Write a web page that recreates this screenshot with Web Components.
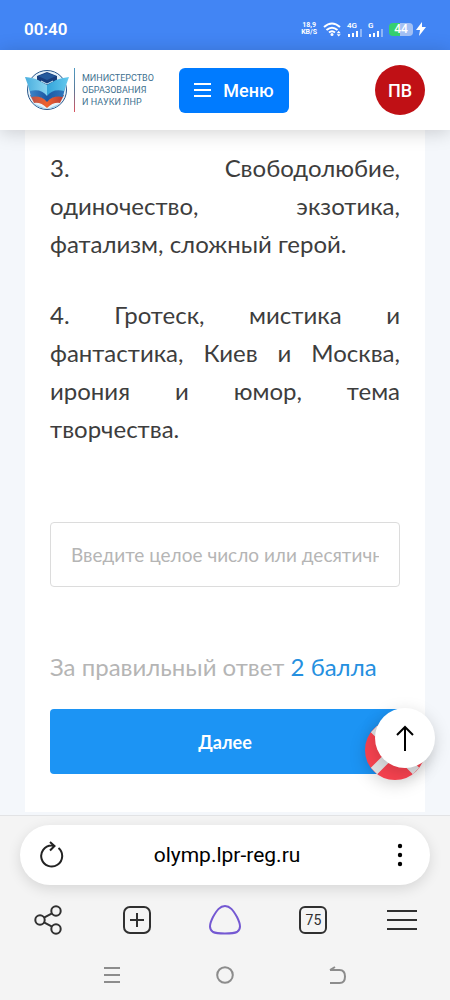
<!DOCTYPE html>
<html lang="ru">
<head>
<meta charset="utf-8">
<meta name="viewport" content="width=device-width, initial-scale=1">
<title>Олимпиада</title>
<style>
  body { margin: 0; min-height: 100vh; display: flex; flex-direction: column; background: #f4f7fb; font-family: Roboto, "Liberation Sans", sans-serif; }
  question-page { flex: 1; }
</style>
</head>
<body>
<status-bar></status-bar>
<site-header initials="ПВ"></site-header>
<question-page>
  <question-card>
    <p>3. Свободолюбие, одиночество, экзотика, фатализм, сложный герой.</p>
    <p>4. Гротеск, мистика и фантастика, Киев и Москва, ирония и юмор, тема творчества.</p>
    <answer-form slot="answer"></answer-form>
  </question-card>
</question-page>
<browser-bar tabs="75">olymp.lpr-reg.ru</browser-bar>
<system-nav></system-nav>

<script>
const define = (name, html, setup) => {
  const template = document.createElement('template');
  template.innerHTML = `<style>*{box-sizing:border-box}button{font:inherit;color:inherit;border:0;padding:0;background:none;cursor:pointer}svg{display:block}</style>${html}`;
  customElements.define(name, class extends HTMLElement {
    constructor() {
      super();
      this.attachShadow({ mode: 'open' }).append(template.content.cloneNode(true));
    }
    connectedCallback() { if (setup) setup(this, this.shadowRoot); }
  });
};

define('status-bar', `
<style>
  :host { display: flex; align-items: center; justify-content: space-between; height: 50px; padding: 8px 24px 0; box-sizing: border-box; background: #4285f4; color: #fff; }
  time { font-size: 17px; font-weight: 600; }
  .icons { display: flex; align-items: center; gap: 6px; }
  .speed { font-size: 7px; line-height: 7px; font-weight: 700; text-align: center; }
  .sim { font-size: 8px; line-height: 7px; font-weight: 600; width: 15px; }
  .battery { width: 24px; height: 13px; border-radius: 4px; font-size: 12px; line-height: 13px; font-weight: 500; text-align: center; background: linear-gradient(90deg, #35cf70 44%, #a3c0f4 44%); }
  .power { display: flex; align-items: center; gap: 3px; }
</style>
<time>00:40</time>
<div class="icons">
  <div class="speed">18,9<br>KB/S</div>
  <svg width="18" height="15" viewBox="0 0 18 15" fill="none" stroke="#fff" stroke-width="2"><path d="M1 5Q9-2 17 5M3.500 8Q9 3.500 14.500 8M6 10.500Q9 8 12 10.500"/><circle cx="9" cy="12.500" r="1.500" fill="#fff" stroke="none"/><path d="M13.700 11.200 15.700 8.800 17.700 11.200zM13.700 12.200 15.700 14.600 17.700 12.200z" fill="#fff" stroke="none"/></svg>
  <div class="sim">4G<svg width="15" height="8" viewBox="0 0 15 8" stroke="#fff" stroke-width="2"><path d="M2 8V5M6 8V4M10 8V2"/><path d="M14 8V0" opacity=".4"/></svg></div>
  <div class="sim">G<svg width="15" height="8" viewBox="0 0 15 8" stroke="#fff" stroke-width="2"><path d="M2 8V5M6 8V4M10 8V2"/><path d="M14 8V0" opacity=".4"/></svg></div>
  <div class="power"><div class="battery">44</div><svg width="10" height="14" viewBox="0 0 10 14"><path d="M6 0 0 8h4l-1 6 7-9H6z" fill="#fff"/></svg></div>
</div>`);

define('ministry-logo', `
<style>
  :host { display: block; }
  a { display: flex; align-items: center; color: #40718f; text-decoration: none; font-size: 9px; line-height: 12px; }
  span { margin-left: 5px; padding: 4px 0 4px 7px; border-left: 1px solid; border-image: linear-gradient(#4d9cc4, #5b7897 50%, #e0505c) 1; white-space: nowrap; }
</style>
<a href="#">
  <svg width="44" height="44" viewBox="0 0 44 44">
    <defs>
      <linearGradient id="wing"><stop stop-color="#49aede"/><stop offset=".5" stop-color="#86d3f0"/><stop offset=".5" stop-color="#33a4da"/><stop offset="1" stop-color="#65c9ee"/></linearGradient>
      <linearGradient id="blue"><stop stop-color="#3e86c9"/><stop offset=".5" stop-color="#1c57a3"/><stop offset="1" stop-color="#2f78bd"/></linearGradient>
      <linearGradient id="red"><stop stop-color="#b6514b"/><stop offset=".5" stop-color="#f0622e"/><stop offset="1" stop-color="#b43b38"/></linearGradient>
      <clipPath id="disc"><circle cx="22" cy="22" r="19"/></clipPath>
    </defs>
    <circle cx="22" cy="22" r="19.500" fill="#e6f3fa" stroke="#27568b"/>
    <g clip-path="url(#disc)">
      <path d="M5 34 22 41 39 34 34 44H10z" fill="#9fd0ee"/>
      <path d="M5 27Q15 26 22 33 29 26 39 27L35 35Q28 34 22 40 16 34 9 35z" fill="url(#red)"/>
    </g>
    <path d="M4 20Q15 18 22 26 29 18 40 20L38 29Q28 27 22 34 16 27 6 29z" fill="url(#blue)"/>
    <path d="M12 8 22 4 32 8V14L22 19 12 14z" fill="#163e7e"/>
    <path d="M13 8 22 12 31 8 22 5z" fill="#245a9c"/>
    <path d="M0 9Q9 10 13 12L22 17 31 12Q36 10 44 9L39 23Q28 20 22 28 16 20 5 23z" fill="url(#wing)"/>
    <path d="M16 13 22 16 28 13" fill="none" stroke="#d3f1fb"/>
  </svg>
  <span>МИНИСТЕРСТВО<br>ОБРАЗОВАНИЯ<br>И НАУКИ ЛНР</span>
</a>`);

define('site-header', `
<style>
  :host { display: flex; align-items: center; height: 80px; padding: 0 25px; box-sizing: border-box; background: #fff; box-shadow: 0 2px 18px rgba(0,0,0,.18); position: relative; z-index: 1; }
  .menu { display: flex; align-items: center; justify-content: center; gap: 12px; width: 110px; height: 45px; margin-left: 25px; border-radius: 6px; background: #007bff; color: #fff; font-size: 18px; font-weight: 500; }
  .user { width: 50px; height: 50px; margin-left: auto; border-radius: 50%; background: #c01015; color: #fff; font-size: 18px; font-weight: 500; }
</style>
<ministry-logo></ministry-logo>
<button class="menu"><svg width="17" height="16" viewBox="0 0 17 16" stroke="#fff" stroke-width="2"><path d="M0 2H17M0 8H17M0 14H17"/></svg>Меню</button>
<button class="user"></button>`,
(host, root) => { root.querySelector('.user').textContent = host.getAttribute('initials'); });

define('question-page', `
<style>
  :host { display: block; position: relative; padding: 0 25px 3px; background: #f4f7fb; }
  .help, .top { position: absolute; width: 60px; height: 60px; border-radius: 50%; filter: drop-shadow(0 4px 8px rgba(0,0,0,.16)); }
  .help { right: 25px; bottom: 35px; }
  .top { right: 15px; bottom: 47px; display: grid; place-items: center; background: #fff; }
</style>
<slot></slot>
<button class="help" aria-label="Помощь"><svg width="60" height="60" viewBox="0 0 60 60" fill="none" stroke-width="17"><circle cx="30" cy="30" r="21.500" stroke="#f5424f"/><path d="M9 9 21 21M51 9 39 21M9 51 21 39M51 51 39 39" stroke="#dedfe1" stroke-width="9"/></svg></button>
<button class="top" aria-label="Наверх"><svg width="18" height="26" viewBox="0 0 18 26" fill="none" stroke="#000" stroke-width="2"><path d="M9 26V2M1 10 9 2 17 10"/></svg></button>`);

define('question-card', `
<style>
  :host { display: block; padding: 19px 25px 38px; background: #fff; color: #3d3d3d; font: 24px/38px Lato, "Noto Sans", sans-serif; }
  ::slotted(p) { margin: 0 0 33px; text-align: justify; }
</style>
<slot></slot>
<slot name="answer"></slot>`);

define('answer-form', `
<style>
  :host { display: block; margin-top: 74px; }
  form { display: flex; flex-direction: column; }
  input { width: 100%; height: 65px; padding: 0 20px; border: 1px solid #dcdcdc; border-radius: 4px; background: #fff; color: #3d3d3d; font: inherit; font-size: 19px; }
  input::placeholder { color: #b5b5b5; opacity: 1; }
  p { margin: 61px 0 23px; color: #b5b5b5; }
  b { color: #2590e0; font-weight: 400; }
  button { height: 65px; border-radius: 4px; background: #1c94f4; color: #fff; font-size: 18px; font-weight: 700; }
</style>
<form>
  <input type="text" aria-label="Ответ" placeholder="Введите целое число или десятичную дробь">
  <p>За правильный ответ <b>2 балла</b></p>
  <button type="button">Далее</button>
</form>`);

define('browser-bar', `
<style>
  :host { display: block; padding: 9px 0 0; border-top: 1px solid #e2e3e5; background: #f4f4f4; color: #303030; }
  .address { display: flex; align-items: center; justify-content: space-between; height: 60px; margin: 0 20px; padding: 0 20px; border-radius: 30px; background: #fff; box-shadow: 0 4px 14px rgba(0,0,0,.12); color: #000; font-size: 21px; }
  .url { flex: 1; }
  nav { display: grid; grid-template-columns: repeat(5, 1fr); height: 65px; padding: 5px 4px 0; }
  nav button { display: grid; place-items: center; }
  .tabs b { display: grid; place-items: center; width: 28px; height: 28px; border: 2px solid; border-radius: 6px; font-size: 14px; font-weight: 400; }
</style>
<div class="address">
  <button aria-label="Обновить"><svg width="24" height="28" viewBox="0 0 24 28" fill="none" stroke="#222" stroke-width="2"><path d="M14 4.500H11.500A10.500 10.500 0 1 0 18.500 7M10 1 14.500 5 10 9.500"/></svg></button>
  <button class="url"><slot></slot></button>
  <button aria-label="Ещё"><svg width="20" height="24" viewBox="0 0 20 24"><circle cx="10" cy="3" r="2.200"/><circle cx="10" cy="12" r="2.200"/><circle cx="10" cy="21" r="2.200"/></svg></button>
</div>
<nav aria-label="Браузер">
  <button aria-label="Поделиться"><svg width="28" height="30" viewBox="0 0 28 30" fill="none" stroke="#303030" stroke-width="2"><circle cx="6" cy="15" r="4.700"/><circle cx="22" cy="6" r="4.700"/><circle cx="22" cy="24" r="4.700"/><path d="M10 12.700 18 8.300M10 17.300 18 21.700"/></svg></button>
  <button aria-label="Новая вкладка"><svg width="28" height="28" viewBox="0 0 28 28" fill="none" stroke="#303030" stroke-width="2"><rect x="1" y="1" width="26" height="26" rx="6"/><path d="M7 14H21M14 7V21"/></svg></button>
  <button aria-label="Алиса"><svg width="32" height="30" viewBox="0 0 32 30" fill="none" stroke="#7458d2" stroke-width="2"><path d="M16 1C21 1 24 5 28 12 32 20 32 24 28 27 24 29 8 29 4 27 0 24 0 20 4 12 8 5 11 1 16 1z"/></svg></button>
  <button class="tabs" aria-label="Вкладки"><b></b></button>
  <button aria-label="Меню браузера"><svg width="30" height="22" viewBox="0 0 30 22" stroke="#303030" stroke-width="2"><path d="M0 2H30M0 11H30M0 20H30"/></svg></button>
</nav>`,
(host, root) => { root.querySelector('.tabs b').textContent = host.getAttribute('tabs'); });

define('system-nav', `
<style>
  :host { display: grid; grid-template-columns: repeat(3, 1fr); height: 50px; padding: 0 56px; box-sizing: border-box; background: #f4f4f4; }
  button { display: grid; place-items: center; }
  svg { fill: none; stroke: #8c8c8c; stroke-width: 2; }
</style>
<button aria-label="Недавние"><svg width="16" height="18" viewBox="0 0 16 18"><path d="M0 2H16M0 9H16M0 16H16"/></svg></button>
<button aria-label="Домой"><svg width="18" height="18" viewBox="0 0 18 18"><circle cx="9" cy="9" r="7.800"/></svg></button>
<button aria-label="Назад"><svg width="18" height="18" viewBox="0 0 18 18"><path d="M1 4H10.500Q16 4 16 10.500T10.500 17H1M6 1 1 4"/></svg></button>`);
</script>
</body>
</html>
